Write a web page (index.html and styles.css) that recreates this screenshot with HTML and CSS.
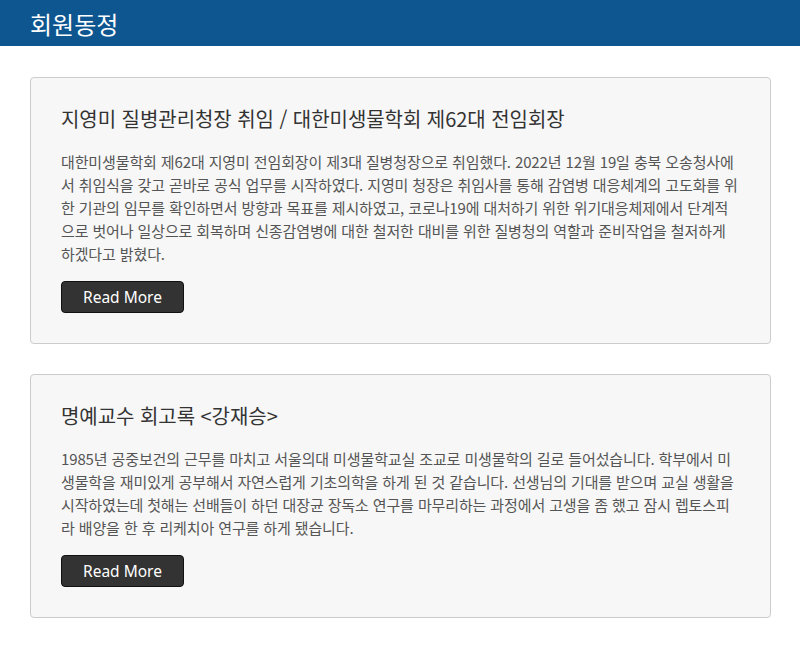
FILE: index.html
```html
<!DOCTYPE html>
<html lang="ko">
<head>
    <meta charset="UTF-8">
    <meta name="viewport" content="width=device-width, initial-scale=1.0">
    <title>회원동정</title>

    <link rel="stylesheet" href="styles.css">
</head>
<body>

    <div id="header">
        <h1>회원동정</h1>
    </div>

    <div id="news">

        <div class="card">
            <h2>지영미 질병관리청장 취임 / 대한미생물학회 제62대 전임회장</h2>
            <p>대한미생물학회 제62대 지영미 전임회장이 제3대 질병청장으로 취임했다. 2022년 12월 19일 충북 오송청사에서 취임식을 갖고 곧바로 공식 업무를 시작하였다. 지영미 청장은 취임사를 통해 감염병 대응체계의 고도화를 위한 기관의 임무를 확인하면서 방향과 목표를 제시하였고, 코로나19에 대처하기 위한 위기대응체제에서 단계적으로 벗어나 일상으로 회복하며 신종감염병에 대한 철저한 대비를 위한 질병청의 역할과 준비작업을 철저하게 하겠다고 밝혔다.</p>
            <button class="button">Read More</button>
        </div>

        <div class="card">
            <h2>명예교수 회고록 &lt;강재승&gt;</h2>
            <p>1985년 공중보건의 근무를 마치고 서울의대 미생물학교실 조교로 미생물학의 길로 들어섰습니다. 학부에서 미생물학을 재미있게 공부해서 자연스럽게 기초의학을 하게 된 것 같습니다. 선생님의 기대를 받으며 교실 생활을 시작하였는데 첫해는 선배들이 하던 대장균 장독소 연구를 마무리하는 과정에서 고생을 좀 했고 잠시 렙토스피라 배양을 한 후 리케치아 연구를 하게 됐습니다.</p>
            <button class="button">Read More</button>
        </div>

    </div>

</body>
</html>
```

FILE: styles.css
```css
body{
    margin: 0;
    background: white;
    font-family: "Noto Sans CJK KR", "Noto Sans", sans-serif;
}

#header{
    background: #0d5690;
    height: 46px;
    padding: 0 30px;
    display: flex;
    align-items: center;
}

#header h1{
    margin: 0;
    color: white;
    font-size: 24px;
    font-weight: 400;
}

#news{
    padding: 31px 29px 30px 30px;
}

.card{
    background: #f7f7f7;
    border: 1px solid #cccccc;
    border-radius: 4px;
    padding: 29px 30px 30px 30px;
    margin-bottom: 30px;
}

.card h2{
    margin: 0 0 19px 0;
    color: #333333;
    font-size: 20px;
    font-weight: 400;
    line-height: 24px;
    letter-spacing: -0.05px;
}

.card p{
    margin: 0 0 16px 0;
    color: #555555;
    font-size: 15px;
    line-height: 23px;
    letter-spacing: -0.12px;
    word-break: break-all;
}

.button{
    font-family: "Noto Sans", sans-serif;
    background: #333333;
    color: white;
    border: 1px solid #111111;
    border-radius: 4px;
    font-size: 15.5px;
    width: 123px;
    height: 32px;
    cursor: pointer;
}

.button:hover{
    background: #222222;
}
```
